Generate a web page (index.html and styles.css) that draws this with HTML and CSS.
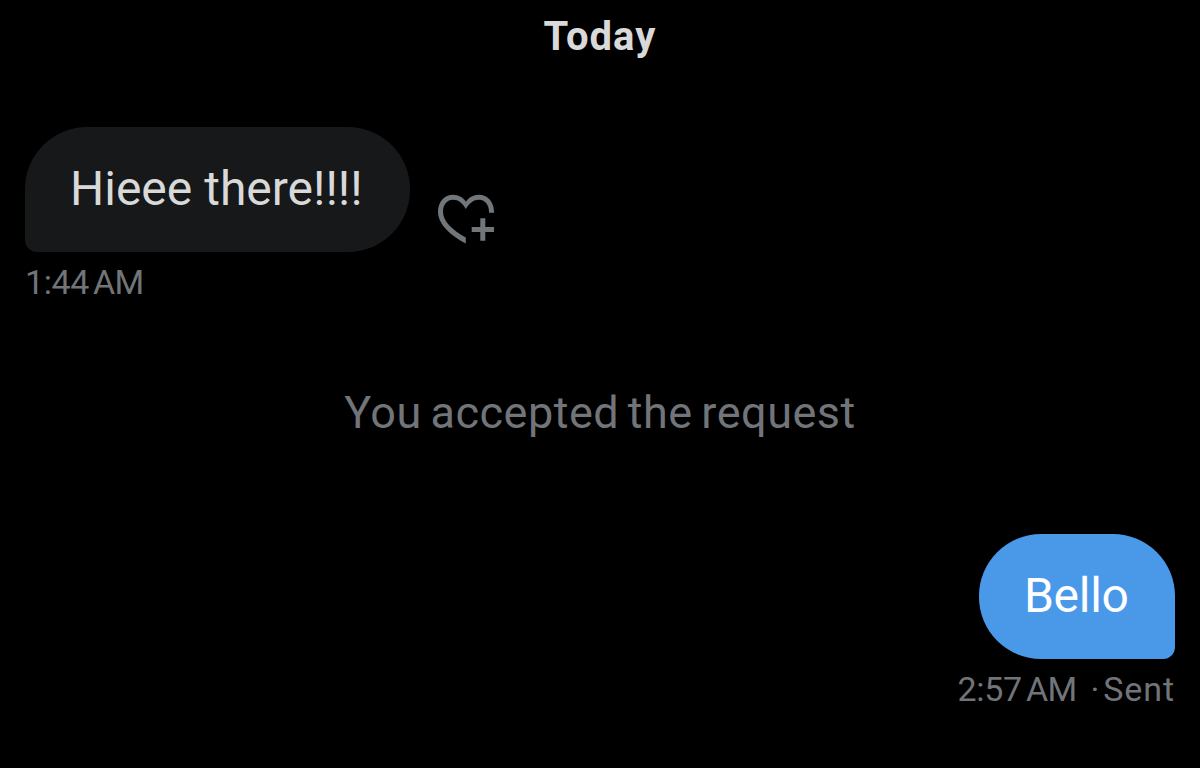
FILE: index.html
```html
<!DOCTYPE html>
<html lang="en">
<head>
    <meta charset="UTF-8">
    <meta name="viewport" content="width=device-width, initial-scale=1.0">
    <title>Messages</title>
    <link rel="stylesheet" href="styles.css">
</head>
<body>
    <main class="chat">
        <h1 class="day">Today</h1>

        <div class="message received">
            <div class="row">
                <div class="bubble">Hieee there!!!!</div>
                <button class="react" aria-label="Add reaction">
                    <svg width="56" height="50" viewBox="0 0 56 50" fill="currentColor">
                        <path d="M56 18.8V17.5C56 8 49.5.7 41 .7C35 .7 30.5 3.6 28 7.8C25.3 3.6 21 .7 15 .7C6.5 .7 0 8 0 17.5C0 31 13 41.5 27.8 49.5V43.5C14.5 36 5 27.5 5 17.5C5 10.5 9.3 5.7 15 5.7C20.5 5.7 24.5 9 27.8 15C31.5 9 35.5 5.7 41 5.7C46.7 5.7 51 10.5 51 17.5V18.8Z"/>
                        <path d="M42.3 24.3H47.3V33H56V38H47.3V46.8H42.3V38H33.7V33H42.3Z"/>
                    </svg>
                </button>
            </div>
            <div class="meta"><span class="time">1:44</span><span class="period">AM</span></div>
        </div>

        <p class="notice">You accepted the request</p>

        <div class="message sent">
            <div class="bubble">Bello</div>
            <div class="meta"><span class="time">2:57</span><span class="period">AM</span><span class="dot">·</span><span class="status">Sent</span></div>
        </div>
    </main>
</body>
</html>
```
FILE: styles.css
```css
* {
    margin: 0;
    padding: 0;
    box-sizing: border-box;
}

body {
    background: #000;
    color: #d9d9d9;
    font-family: Roboto, "Liberation Sans", sans-serif;
}

.chat {
    display: flex;
    flex-direction: column;
    height: 768px;
    padding: 12px 25px 0;
    overflow: hidden;
}

.day {
    height: 49px;
    line-height: 49px;
    font-size: 40px;
    font-weight: 700;
    letter-spacing: 1px;
    text-align: center;
}

.message {
    display: flex;
    flex-direction: column;
}

.received {
    margin-top: 65.5px;
    align-items: flex-start;
}

.sent {
    margin-top: 91px;
    align-items: flex-end;
}

.row {
    display: flex;
    align-items: flex-end;
    gap: 28px;
}

.bubble {
    height: 125px;
    line-height: 124px;
    padding: 0 45px;
    font-size: 48px;
    white-space: nowrap;
}

.received .bubble {
    width: 385px;
    background: #16181a;
    border-radius: 62px 62px 62px 12px;
}

.sent .bubble {
    width: 196px;
    background: #4a99e9;
    color: #fff;
    letter-spacing: -0.3px;
    border-radius: 62px 62px 12px 62px;
}

.react {
    border: none;
    background: none;
    color: #71767b;
    height: 50px;
    margin-bottom: 7.5px;
}

.react svg {
    display: block;
}

.meta {
    display: flex;
    height: 61.5px;
    line-height: 61px;
    font-size: 34px;
    color: #717479;
}

.time {
    margin-right: 4px;
    letter-spacing: -0.4px;
}

.period {
    letter-spacing: -0.7px;
}

.sent .time {
    letter-spacing: -0.3px;
}

.dot {
    margin: 0 4px 0 14px;
}

.status {
    letter-spacing: 0.9px;
}

.notice {
    margin-top: 70px;
    height: 60px;
    line-height: 60px;
    font-size: 45px;
    word-spacing: -3px;
    letter-spacing: 0.5px;
    text-align: center;
    color: #717479;
}
```
